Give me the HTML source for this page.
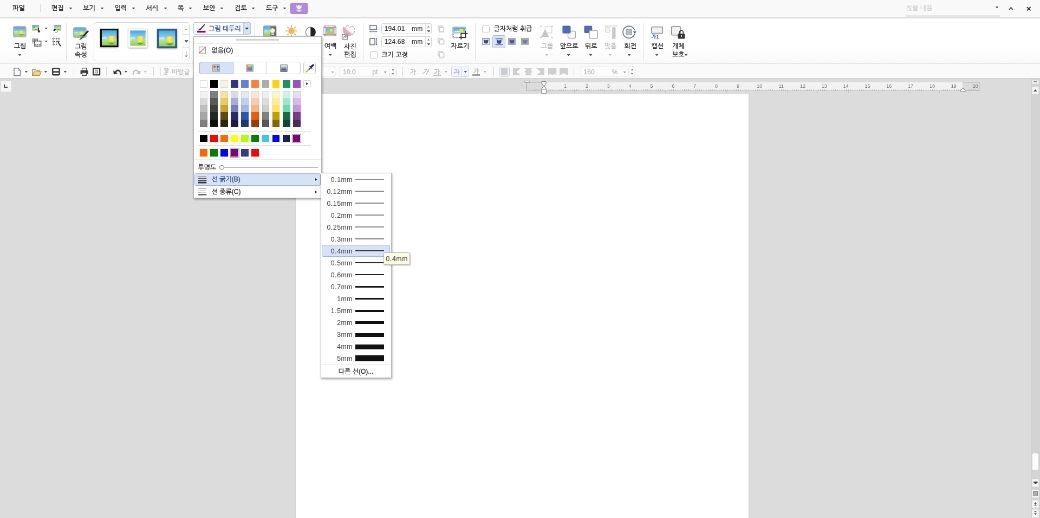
<!DOCTYPE html>
<html lang="ko"><head><meta charset="utf-8"><title>한글</title>
<style>
html,body{margin:0;padding:0;background:#dcdcdc;overflow:hidden;}
body{width:1040px;height:518px;position:relative;font-family:"Liberation Sans","NanumGothic","Noto Sans CJK KR",sans-serif;}
#root{position:absolute;left:0;top:0;width:1920px;height:956.3px;transform:scale(0.5416667);transform-origin:0 0;font-size:12px;color:#1e1e1e;overflow:hidden;background:#dcdcdc;will-change:transform;}
.a{position:absolute;box-sizing:border-box;}
.t{white-space:nowrap;font-size:12px;-webkit-text-stroke:0.34px currentColor;}
.g{color:#b4b4b4;}
.bl{color:#2b4c9b;}
svg{overflow:visible;}
</style></head><body><div id="root">
<div class="a " style="left:0.00px;top:0.00px;width:1920.00px;height:31.38px;background:#f9f9f9;"></div>
<div class="a " style="left:0.00px;top:31.38px;width:1920.00px;height:86.77px;background:linear-gradient(#ffffff,#ffffff 60%,#f9f9f9);"></div>
<div class="a" style="left:0.00px;top:30.89px;height:1px;width:1920.00px;background:#cfcfcf"></div>
<div class="a " style="left:0.00px;top:118.15px;width:1920.00px;height:26.22px;background:#fafafa;"></div>
<div class="a" style="left:0.00px;top:117.29px;height:1px;width:1920.00px;background:#e2e2e2"></div>
<div class="a" style="left:0.00px;top:143.87px;height:1px;width:1920.00px;background:#cfcfcf"></div>
<div class="a " style="left:543.88px;top:173.54px;width:839.63px;height:784.62px;background:#fff;border:2px solid #d3d3d3;border-bottom:0;border-top:0;"></div>
<div class="a " style="left:1903.38px;top:144.74px;width:16.62px;height:811.57px;background:#d3d3d3;"></div>
<div class="a t " style="left:23.26px;top:4.06px;height:22.15px;line-height:22.15px;color:#1e1e1e;-webkit-text-stroke:0.5px #1e1e1e;">파일</div>
<div class="a t " style="left:95.08px;top:4.06px;height:22.15px;line-height:22.15px;color:#1e1e1e;">편집</div>
<svg class="a" style="left:127.61px;top:13.95px;width:5.10px;height:3.12px;" viewBox="0 0 10 6" preserveAspectRatio="none"><path d="M0 0H10V1.6L5.7 6H4.3L0 1.6Z" fill="#555"/></svg>
<div class="a t " style="left:153.23px;top:4.06px;height:22.15px;line-height:22.15px;color:#1e1e1e;">보기</div>
<svg class="a" style="left:185.76px;top:13.95px;width:5.10px;height:3.12px;" viewBox="0 0 10 6" preserveAspectRatio="none"><path d="M0 0H10V1.6L5.7 6H4.3L0 1.6Z" fill="#555"/></svg>
<div class="a t " style="left:211.57px;top:4.06px;height:22.15px;line-height:22.15px;color:#1e1e1e;">입력</div>
<svg class="a" style="left:243.91px;top:13.95px;width:5.10px;height:3.12px;" viewBox="0 0 10 6" preserveAspectRatio="none"><path d="M0 0H10V1.6L5.7 6H4.3L0 1.6Z" fill="#555"/></svg>
<div class="a t " style="left:269.54px;top:4.06px;height:22.15px;line-height:22.15px;color:#1e1e1e;">서식</div>
<svg class="a" style="left:302.62px;top:13.95px;width:5.10px;height:3.12px;" viewBox="0 0 10 6" preserveAspectRatio="none"><path d="M0 0H10V1.6L5.7 6H4.3L0 1.6Z" fill="#555"/></svg>
<div class="a t " style="left:328.06px;top:4.06px;height:22.15px;line-height:22.15px;color:#1e1e1e;">쪽</div>
<svg class="a" style="left:349.14px;top:13.95px;width:5.10px;height:3.12px;" viewBox="0 0 10 6" preserveAspectRatio="none"><path d="M0 0H10V1.6L5.7 6H4.3L0 1.6Z" fill="#555"/></svg>
<div class="a t " style="left:374.95px;top:4.06px;height:22.15px;line-height:22.15px;color:#1e1e1e;">보안</div>
<svg class="a" style="left:407.30px;top:13.95px;width:5.10px;height:3.12px;" viewBox="0 0 10 6" preserveAspectRatio="none"><path d="M0 0H10V1.6L5.7 6H4.3L0 1.6Z" fill="#555"/></svg>
<div class="a t " style="left:433.11px;top:4.06px;height:22.15px;line-height:22.15px;color:#1e1e1e;">검토</div>
<svg class="a" style="left:465.08px;top:13.95px;width:5.10px;height:3.12px;" viewBox="0 0 10 6" preserveAspectRatio="none"><path d="M0 0H10V1.6L5.7 6H4.3L0 1.6Z" fill="#555"/></svg>
<div class="a t " style="left:491.08px;top:4.06px;height:22.15px;line-height:22.15px;color:#1e1e1e;">도구</div>
<svg class="a" style="left:523.24px;top:13.95px;width:5.10px;height:3.12px;" viewBox="0 0 10 6" preserveAspectRatio="none"><path d="M0 0H10V1.6L5.7 6H4.3L0 1.6Z" fill="#555"/></svg>
<div class="a" style="left:74.46px;top:8.31px;width:1px;height:14.77px;background:#d8d8d8"></div>
<div class="a " style="left:535.57px;top:4.98px;width:31.94px;height:20.68px;background:#b189dd;border:1px solid #a576d4;border-radius:2.5px;box-shadow:0 0 0 1.5px rgba(255,255,255,.9);"></div>
<svg class="a" style="left:545.54px;top:7.75px;width:12.00px;height:14.77px;" viewBox="0 0 13 16" preserveAspectRatio="none"><g opacity="0.88"><path d="M1.6 1.4 L4 3.6 L6.5 0.6 L9 3.6 L11.4 1.4 Q12.6 5 11 7.6 Q9.4 9.8 6.5 9.8 Q3.6 9.8 2 7.6 Q0.4 5 1.6 1.4Z" fill="#fff"/><path d="M6.5 9.6 V13" stroke="#fff" stroke-width="1.6"/><path d="M1.6 10.8 Q2.6 14.6 6.5 14 Q10.4 14.6 11.4 10.8 Q9.6 13 6.5 12.4 Q3.4 13 1.6 10.8Z" fill="#fff" stroke="#fff" stroke-width="0.8"/></g></svg>
<div class="a t " style="left:1672.98px;top:3.69px;height:22.15px;line-height:22.15px;color:#cacaca;-webkit-text-stroke:0.15px #cacaca;">찾을 내용</div>
<div class="a " style="left:1672.25px;top:27.88px;width:173.91px;height:3.14px;background:#e7e7e7;"></div>
<svg class="a" style="left:1838.07px;top:11.92px;width:5.10px;height:3.12px;" viewBox="0 0 10 6" preserveAspectRatio="none"><path d="M0 0H10V1.6L5.7 6H4.3L0 1.6Z" fill="#555"/></svg>
<svg class="a" style="left:1862.03px;top:13.29px;width:8.86px;height:5.54px;" viewBox="0 0 10 6" preserveAspectRatio="none"><path d="M1 5.5 L5 1 L9 5.5" stroke="#444" stroke-width="2" fill="none"/></svg>
<svg class="a" style="left:1894.52px;top:12.37px;width:8.49px;height:8.12px;" viewBox="0 0 10 10" preserveAspectRatio="none"><path d="M1 1 L9 9 M9 1 L1 9" stroke="#333" stroke-width="2.2" fill="none"/></svg>
<div class="a " style="left:0.00px;top:30.83px;width:1920.00px;height:4.06px;background:linear-gradient(#d2d2d2,#e6e6e6 55%,#ffffff);"></div>
<svg class="a" style="width:0;height:0"><defs><linearGradient id="sky" x1="0" y1="0" x2="0" y2="1"><stop offset="0" stop-color="#44a9e0"/><stop offset="0.55" stop-color="#7cc8ee"/><stop offset="1" stop-color="#a4daf3"/></linearGradient><linearGradient id="grs" x1="0" y1="0" x2="0" y2="1"><stop offset="0" stop-color="#b9e68a"/><stop offset="1" stop-color="#8fcd5c"/></linearGradient></defs></svg>
<svg class="a" style="left:24.00px;top:48.18px;width:24.74px;height:21.05px;" viewBox="0 0 20 16" preserveAspectRatio="none"><rect x="0" y="0" width="20" height="16" rx="2.8" fill="#b4b4b4"/><g transform="translate(1.9 1.9) scale(16.2 12.2)"><rect x="0" y="0" width="1" height="0.66" fill="url(#sky)"/><rect x="0" y="0.6" width="1" height="0.4" fill="url(#grs)"/><path d="M0 0.50 q0.05 -0.12 0.12 -0.06 q0.06 -0.1 0.13 0 q0.08 -0.04 0.12 0.08 q-0.2 0.08 -0.37 0.04z" fill="#e4f4fc" opacity="0.6"/><path d="M0.42 0.78 q0.08 0.14 0.23 0.15 q0.15 -0.01 0.23 -0.15 q-0.12 0.08 -0.22 0.02 l-0.02 0 q-0.1 0.06 -0.22 -0.02z" fill="#4aa63a"/><path d="M0.63 0.74 h0.04 v0.16 h-0.04z" fill="#5bb346"/><path d="M0.46 0.40 q0.19 -0.1 0.38 0 v0.18 a0.19 0.2 0 0 1 -0.38 0z" fill="#ffdb20"/><path d="M0.54 0.42 q0.11 -0.05 0.22 0 v0.15 a0.11 0.14 0 0 1 -0.22 0z" fill="#ffe75a"/></g></svg>
<div class="a t " style="left:25.85px;top:74.22px;height:22.15px;line-height:22.15px;">그림</div>
<svg class="a" style="left:34.01px;top:100.16px;width:5.10px;height:3.12px;" viewBox="0 0 10 6" preserveAspectRatio="none"><path d="M0 0H10V1.6L5.7 6H4.3L0 1.6Z" fill="#555"/></svg>
<svg class="a" style="left:58.71px;top:46.15px;width:12.92px;height:10.52px;" viewBox="0 0 20 16" preserveAspectRatio="none"><rect x="0" y="0" width="20" height="16" rx="1" fill="#b4b4b4"/><g transform="translate(1.2 1.2) scale(17.6 13.6)"><rect x="0" y="0" width="1" height="0.66" fill="url(#sky)"/><rect x="0" y="0.6" width="1" height="0.4" fill="url(#grs)"/><path d="M0 0.50 q0.05 -0.12 0.12 -0.06 q0.06 -0.1 0.13 0 q0.08 -0.04 0.12 0.08 q-0.2 0.08 -0.37 0.04z" fill="#e4f4fc" opacity="0.6"/><path d="M0.42 0.78 q0.08 0.14 0.23 0.15 q0.15 -0.01 0.23 -0.15 q-0.12 0.08 -0.22 0.02 l-0.02 0 q-0.1 0.06 -0.22 -0.02z" fill="#4aa63a"/><path d="M0.63 0.74 h0.04 v0.16 h-0.04z" fill="#5bb346"/><path d="M0.46 0.40 q0.19 -0.1 0.38 0 v0.18 a0.19 0.2 0 0 1 -0.38 0z" fill="#ffdb20"/><path d="M0.54 0.42 q0.11 -0.05 0.22 0 v0.15 a0.11 0.14 0 0 1 -0.22 0z" fill="#ffe75a"/></g><circle cx="6.4" cy="6.6" r="2.4" fill="#2a8fe6"/></svg>
<svg class="a" style="left:69.42px;top:51.32px;width:5.17px;height:9.23px;" viewBox="0 0 5.6 10" preserveAspectRatio="none"><path d="M2.2 0V6.4" stroke="#222" stroke-width="1.8"/><path d="M0.8 5.6 H5 V9.4 H1.6Z" fill="#222"/></svg>
<svg class="a" style="left:82.77px;top:51.18px;width:4.67px;height:2.88px;" viewBox="0 0 10 6" preserveAspectRatio="none"><path d="M0 0H10V1.6L5.7 6H4.3L0 1.6Z" fill="#555"/></svg>
<svg class="a" style="left:99.69px;top:46.15px;width:12.92px;height:10.52px;" viewBox="0 0 20 16" preserveAspectRatio="none"><rect x="0" y="0" width="20" height="16" rx="1" fill="#b4b4b4"/><g transform="translate(1.2 1.2) scale(17.6 13.6)"><rect x="0" y="0" width="1" height="0.66" fill="url(#sky)"/><rect x="0" y="0.6" width="1" height="0.4" fill="url(#grs)"/><path d="M0 0.50 q0.05 -0.12 0.12 -0.06 q0.06 -0.1 0.13 0 q0.08 -0.04 0.12 0.08 q-0.2 0.08 -0.37 0.04z" fill="#e4f4fc" opacity="0.6"/><path d="M0.42 0.78 q0.08 0.14 0.23 0.15 q0.15 -0.01 0.23 -0.15 q-0.12 0.08 -0.22 0.02 l-0.02 0 q-0.1 0.06 -0.22 -0.02z" fill="#4aa63a"/><path d="M0.63 0.74 h0.04 v0.16 h-0.04z" fill="#5bb346"/><path d="M0.46 0.40 q0.19 -0.1 0.38 0 v0.18 a0.19 0.2 0 0 1 -0.38 0z" fill="#ffdb20"/><path d="M0.54 0.42 q0.11 -0.05 0.22 0 v0.15 a0.11 0.14 0 0 1 -0.22 0z" fill="#ffe75a"/></g><circle cx="6.4" cy="6.6" r="2.2" fill="#9fd0f0"/></svg>
<svg class="a" style="left:96.74px;top:52.80px;width:10.71px;height:8.12px;" viewBox="0 0 11.6 8.8" preserveAspectRatio="none"><path d="M10.6 4.4 Q9.6 8 4.6 8" stroke="#8a8a8a" stroke-width="1.3" fill="none"/><path d="M0.4 3 L4.2 0.6 L4.8 4.8Z" fill="#222"/><path d="M3.4 2.8 L6.6 1.8" stroke="#222" stroke-width="1.6"/></svg>
<svg class="a" style="left:58.71px;top:70.71px;width:17.35px;height:14.58px;" viewBox="0 0 18.8 15.8" preserveAspectRatio="none"><rect x="0" y="0" width="12.4" height="9.8" fill="#a8a8a8"/><rect x="1" y="1" width="10.4" height="7.8" fill="#4a7ad8"/><rect x="1" y="1" width="3.6" height="7.8" fill="#8fb4ee"/><circle cx="8.4" cy="3.6" r="2.2" fill="#f2a83a"/><rect x="1" y="6.4" width="10.4" height="2.4" fill="#e8d890"/><rect x="5.4" y="5.2" width="12.6" height="10" fill="#fff" stroke="#2a2a2a" stroke-width="1.6" stroke-dasharray="3.4 0.7"/><path d="M5.4 11.6H18" stroke="#333" stroke-width="1.3" stroke-dasharray="3.4 0.7"/></svg>
<svg class="a" style="left:82.77px;top:74.99px;width:4.67px;height:2.88px;" viewBox="0 0 10 6" preserveAspectRatio="none"><path d="M0 0H10V1.6L5.7 6H4.3L0 1.6Z" fill="#555"/></svg>
<svg class="a" style="left:96.00px;top:68.68px;width:16.62px;height:16.62px;" viewBox="0 0 18 18" preserveAspectRatio="none"><path d="M1 2H15 M1 8H15 M1 14H11 M2.4 0.5V15.4 M8.4 0.5V15.4 M14 0.5V10" stroke="#444" stroke-width="1.5" stroke-dasharray="2 1.3" fill="none"/><path d="M11.6 7.6 L14.6 13.6 L17.6 17.6" stroke="#222" stroke-width="2" fill="none"/></svg>
<div class="a" style="left:122.09px;top:42.83px;width:1px;height:68.68px;background:#e0e0e0"></div>
<svg class="a" style="left:134.95px;top:49.66px;width:24.92px;height:20.12px;" viewBox="0 0 20 16" preserveAspectRatio="none"><rect x="0" y="0" width="20" height="16" rx="2.8" fill="#b4b4b4"/><g transform="translate(1.9 1.9) scale(16.2 12.2)"><rect x="0" y="0" width="1" height="0.66" fill="url(#sky)"/><rect x="0" y="0.6" width="1" height="0.4" fill="url(#grs)"/><path d="M0 0.50 q0.05 -0.12 0.12 -0.06 q0.06 -0.1 0.13 0 q0.08 -0.04 0.12 0.08 q-0.2 0.08 -0.37 0.04z" fill="#e4f4fc" opacity="0.6"/><path d="M0.42 0.78 q0.08 0.14 0.23 0.15 q0.15 -0.01 0.23 -0.15 q-0.12 0.08 -0.22 0.02 l-0.02 0 q-0.1 0.06 -0.22 -0.02z" fill="#4aa63a"/><path d="M0.63 0.74 h0.04 v0.16 h-0.04z" fill="#5bb346"/><path d="M0.46 0.40 q0.19 -0.1 0.38 0 v0.18 a0.19 0.2 0 0 1 -0.38 0z" fill="#ffdb20"/><path d="M0.54 0.42 q0.11 -0.05 0.22 0 v0.15 a0.11 0.14 0 0 1 -0.22 0z" fill="#ffe75a"/></g></svg>
<svg class="a" style="left:145.11px;top:56.49px;width:18.83px;height:18.09px;" viewBox="0 0 20.4 19.6" preserveAspectRatio="none"><path d="M18.6 2 L8.4 13" stroke="#2a2a2a" stroke-width="3.4" stroke-linecap="round"/><path d="M9.6 10.6 L11.6 12.6 L6.6 17.4 Q3.6 19.4 0.8 19 Q3.4 17.4 4 14.8Z" fill="#2f62c0"/></svg>
<div class="a t " style="left:138.09px;top:74.95px;height:22.15px;line-height:22.15px;">그림</div>
<div class="a t " style="left:138.09px;top:89.72px;height:22.15px;line-height:22.15px;">속성</div>
<div class="a " style="left:172.80px;top:41.17px;width:176.86px;height:72.18px;background:#fff;border:1px solid #d9d9d9;border-radius:5px;"></div>
<div class="a" style="left:336.79px;top:41.72px;width:1px;height:71.26px;background:#e4e4e4"></div>
<div class="a" style="left:337.29px;top:63.01px;height:1px;width:12.00px;background:#e4e4e4"></div>
<div class="a" style="left:337.29px;top:87.19px;height:1px;width:12.00px;background:#e4e4e4"></div>
<svg class="a" style="left:184.98px;top:53.17px;width:33.60px;height:33.97px;filter:drop-shadow(0.5px 1.5px 1.5px rgba(0,0,0,.45));" viewBox="0 0 20 20" preserveAspectRatio="none"><rect x="0" y="0" width="20" height="20" fill="#0a0a0a"/><g transform="translate(1.75 1.75) scale(16.5 16.5)"><rect x="0" y="0" width="1" height="0.66" fill="url(#sky)"/><rect x="0" y="0.6" width="1" height="0.4" fill="url(#grs)"/><path d="M0 0.50 q0.05 -0.12 0.12 -0.06 q0.06 -0.1 0.13 0 q0.08 -0.04 0.12 0.08 q-0.2 0.08 -0.37 0.04z" fill="#e4f4fc" opacity="0.6"/><path d="M0.42 0.78 q0.08 0.14 0.23 0.15 q0.15 -0.01 0.23 -0.15 q-0.12 0.08 -0.22 0.02 l-0.02 0 q-0.1 0.06 -0.22 -0.02z" fill="#4aa63a"/><path d="M0.63 0.74 h0.04 v0.16 h-0.04z" fill="#5bb346"/><path d="M0.46 0.40 q0.19 -0.1 0.38 0 v0.18 a0.19 0.2 0 0 1 -0.38 0z" fill="#ffdb20"/><path d="M0.54 0.42 q0.11 -0.05 0.22 0 v0.15 a0.11 0.14 0 0 1 -0.22 0z" fill="#ffe75a"/></g></svg>
<svg class="a" style="left:237.05px;top:52.80px;width:35.08px;height:34.89px;filter:drop-shadow(0.5px 1.5px 1.5px rgba(0,0,0,.45));" viewBox="0 0 20 20" preserveAspectRatio="none"><rect x="0" y="0" width="20" height="20" fill="#ffffff"/><g transform="translate(1.9 1.9) scale(16.2 16.2)"><rect x="0" y="0" width="1" height="0.66" fill="url(#sky)"/><rect x="0" y="0.6" width="1" height="0.4" fill="url(#grs)"/><path d="M0 0.50 q0.05 -0.12 0.12 -0.06 q0.06 -0.1 0.13 0 q0.08 -0.04 0.12 0.08 q-0.2 0.08 -0.37 0.04z" fill="#e4f4fc" opacity="0.6"/><path d="M0.42 0.78 q0.08 0.14 0.23 0.15 q0.15 -0.01 0.23 -0.15 q-0.12 0.08 -0.22 0.02 l-0.02 0 q-0.1 0.06 -0.22 -0.02z" fill="#4aa63a"/><path d="M0.63 0.74 h0.04 v0.16 h-0.04z" fill="#5bb346"/><path d="M0.46 0.40 q0.19 -0.1 0.38 0 v0.18 a0.19 0.2 0 0 1 -0.38 0z" fill="#ffdb20"/><path d="M0.54 0.42 q0.11 -0.05 0.22 0 v0.15 a0.11 0.14 0 0 1 -0.22 0z" fill="#ffe75a"/></g></svg>
<svg class="a" style="left:289.66px;top:52.62px;width:36.92px;height:36.00px;filter:drop-shadow(0.5px 1.5px 1.5px rgba(0,0,0,.45));" viewBox="0 0 20 20" preserveAspectRatio="none"><rect x="0" y="0" width="20" height="20" fill="#2b5797"/><g transform="translate(1.9 1.9) scale(16.2 16.2)"><rect x="0" y="0" width="1" height="0.66" fill="url(#sky)"/><rect x="0" y="0.6" width="1" height="0.4" fill="url(#grs)"/><path d="M0 0.50 q0.05 -0.12 0.12 -0.06 q0.06 -0.1 0.13 0 q0.08 -0.04 0.12 0.08 q-0.2 0.08 -0.37 0.04z" fill="#e4f4fc" opacity="0.6"/><path d="M0.42 0.78 q0.08 0.14 0.23 0.15 q0.15 -0.01 0.23 -0.15 q-0.12 0.08 -0.22 0.02 l-0.02 0 q-0.1 0.06 -0.22 -0.02z" fill="#4aa63a"/><path d="M0.63 0.74 h0.04 v0.16 h-0.04z" fill="#5bb346"/><path d="M0.46 0.40 q0.19 -0.1 0.38 0 v0.18 a0.19 0.2 0 0 1 -0.38 0z" fill="#ffdb20"/><path d="M0.54 0.42 q0.11 -0.05 0.22 0 v0.15 a0.11 0.14 0 0 1 -0.22 0z" fill="#ffe75a"/></g></svg>
<svg class="a" style="left:341.17px;top:51.69px;width:5.17px;height:3.69px;" viewBox="0 0 10 6" preserveAspectRatio="none"><path d="M0 6H10L5 0Z" fill="#a8a8a8"/></svg>
<svg class="a" style="left:340.78px;top:73.60px;width:5.94px;height:4.56px;" viewBox="0 0 10 6" preserveAspectRatio="none"><path d="M0 0H10V1.6L5.7 6H4.3L0 1.6Z" fill="#666"/></svg>
<svg class="a" style="left:341.17px;top:94.15px;width:5.17px;height:11.45px;" viewBox="0 0 6 13" preserveAspectRatio="none"><path d="M3 0V12 M0.5 9 L3 12.5 L5.5 9" stroke="#555" stroke-width="1.1" fill="none"/></svg>
<div class="a " style="left:357.23px;top:41.17px;width:105.97px;height:23.08px;background:#fdfdff;border:1px solid #b4c6ee;border-radius:2.5px;"></div>
<div class="a " style="left:448.98px;top:41.17px;width:14.22px;height:23.08px;background:#d8e2f6;border:1px solid #b4c6ee;border-radius:0 2.5px 2.5px 0;"></div>
<svg class="a" style="left:363.69px;top:45.42px;width:15.51px;height:15.51px;" viewBox="0 0 17 17" preserveAspectRatio="none"><path d="M14.5 1 L6 10.5" stroke="#222" stroke-width="2.2" stroke-linecap="round"/><path d="M6.6 9.2 L3.2 12.4 L2.6 11 Z" fill="#222"/><path d="M7.2 9.4 L4 12.2 L2.2 12.4 L2.8 10.6 L5.8 8z" fill="#333"/><rect x="0" y="13" width="17" height="3.6" fill="#8b008b"/></svg>
<div class="a t " style="left:385.11px;top:41.72px;height:22.15px;line-height:22.15px;color:#2b4c9b;">그림 테두리</div>
<svg class="a" style="left:453.06px;top:50.82px;width:5.52px;height:3.60px;" viewBox="0 0 10 6" preserveAspectRatio="none"><path d="M0 0H10V1.6L5.7 6H4.3L0 1.6Z" fill="#223a7a"/></svg>
<div class="a" style="left:469.35px;top:42.83px;width:1px;height:68.68px;background:#e0e0e0"></div>
<svg class="a" style="left:485.91px;top:47.08px;width:24.55px;height:21.05px;" viewBox="0 0 20 16" preserveAspectRatio="none"><rect x="0" y="0" width="20" height="16" rx="2.2" fill="#a6a6a6"/><g transform="translate(1.5 1.5) scale(17.0 13.0)"><rect x="0" y="0" width="1" height="0.66" fill="url(#sky)"/><rect x="0" y="0.6" width="1" height="0.4" fill="url(#grs)"/><path d="M0 0.50 q0.05 -0.12 0.12 -0.06 q0.06 -0.1 0.13 0 q0.08 -0.04 0.12 0.08 q-0.2 0.08 -0.37 0.04z" fill="#e4f4fc" opacity="0.6"/><path d="M0.42 0.78 q0.08 0.14 0.23 0.15 q0.15 -0.01 0.23 -0.15 q-0.12 0.08 -0.22 0.02 l-0.02 0 q-0.1 0.06 -0.22 -0.02z" fill="#4aa63a"/><path d="M0.63 0.74 h0.04 v0.16 h-0.04z" fill="#5bb346"/><path d="M0.46 0.40 q0.19 -0.1 0.38 0 v0.18 a0.19 0.2 0 0 1 -0.38 0z" fill="#ffdb20"/><path d="M0.54 0.42 q0.11 -0.05 0.22 0 v0.15 a0.11 0.14 0 0 1 -0.22 0z" fill="#ffe75a"/></g><rect x="11" y="1.4" width="7.8" height="13.2" fill="#6e6e6e"/><circle cx="14" cy="7.2" r="3.2" fill="#fffef0"/><path d="M11.6 6.6 A3.2 3.2 0 0 1 14.6 4.1 L13 7.6Z" fill="#ffe23a"/><path d="M12.2 11.2 h3.8 v2 h-3.8z" fill="#f0f0f0"/></svg>
<svg class="a" style="left:526.52px;top:46.34px;width:22.15px;height:22.15px;" viewBox="0 0 24 24" preserveAspectRatio="none"><circle cx="12" cy="12" r="6.2" fill="#ffa64a"/><circle cx="12" cy="12" r="4.2" fill="#ffb25e"/><path d="M20.20 12.00 L23.00 12.00" stroke="#ffa64a" stroke-width="2" stroke-linecap="round"/><path d="M17.80 17.80 L19.78 19.78" stroke="#ffa64a" stroke-width="2" stroke-linecap="round"/><path d="M12.00 20.20 L12.00 23.00" stroke="#ffa64a" stroke-width="2" stroke-linecap="round"/><path d="M6.20 17.80 L4.22 19.78" stroke="#ffa64a" stroke-width="2" stroke-linecap="round"/><path d="M3.80 12.00 L1.00 12.00" stroke="#ffa64a" stroke-width="2" stroke-linecap="round"/><path d="M6.20 6.20 L4.22 4.22" stroke="#ffa64a" stroke-width="2" stroke-linecap="round"/><path d="M12.00 3.80 L12.00 1.00" stroke="#ffa64a" stroke-width="2" stroke-linecap="round"/><path d="M17.80 6.20 L19.78 4.22" stroke="#ffa64a" stroke-width="2" stroke-linecap="round"/></svg>
<svg class="a" style="left:563.08px;top:48.74px;width:20.68px;height:20.68px;" viewBox="0 0 20 20" preserveAspectRatio="none"><circle cx="10" cy="10" r="8.8" fill="#fff" stroke="#a0a0a0" stroke-width="1.7"/><path d="M10 1 A9 9 0 0 1 10 19Z" fill="#222"/></svg>
<svg class="a" style="left:597.42px;top:47.45px;width:24.18px;height:20.12px;" viewBox="0 0 24 20" preserveAspectRatio="none"><rect x="0.9" y="0.9" width="22.2" height="18.2" rx="2.4" fill="#fff" stroke="#b6b6b6" stroke-width="1.8"/><rect x="5" y="4.4" width="14" height="11" fill="#6cc0ea"/><rect x="5" y="10.4" width="14" height="5" fill="#9ad468"/><circle cx="14.4" cy="8.6" r="2.6" fill="#ffe02a"/><path d="M4.2 0.6V19.4 M19.8 0.6V19.4 M0.6 3.6H23.4 M0.6 16.4H23.4" stroke="#e85a5a" stroke-width="0.9" fill="none"/></svg>
<div class="a t " style="left:598.71px;top:74.22px;height:22.15px;line-height:22.15px;">여백</div>
<svg class="a" style="left:606.87px;top:100.16px;width:5.10px;height:3.12px;" viewBox="0 0 10 6" preserveAspectRatio="none"><path d="M0 0H10V1.6L5.7 6H4.3L0 1.6Z" fill="#555"/></svg>
<svg class="a" style="left:631.38px;top:46.52px;width:24.74px;height:26.58px;" viewBox="0 0 26.8 28.8" preserveAspectRatio="none"><path d="M3.4 3.2 L7 6.4 L9.4 1 L13 0.4 L15.6 4.4 L19.4 1.6 Q23.4 1.6 25.4 6 Q28 13 22 17.6 Q16 21.6 9.6 19.4 Q3.6 16.6 2.4 10 Q2 6 3.4 3.2Z" fill="#f6f6f6" stroke="#b0b0b0" stroke-width="1.1"/><path d="M11.6 2.6 L13.4 1.6 L15.4 5.4 L18.8 3.4 L22 5.6 Q24 12 19.4 14.4 Z" fill="#ffffff"/><path d="M3.4 3.2 Q2 6 2.4 10 Q3.6 16.6 9.6 19.4 Q13.4 20.8 17.4 19.8 L20.6 17.6 Z" fill="#f4a2c2"/><rect x="0.8" y="18" width="10.4" height="10" fill="#f4f4f4" stroke="#909090" stroke-width="1.5"/><path d="M2.6 26 L5.6 21.4 L7.4 24 L9.4 22.4" stroke="#8a8a8a" stroke-width="1.2" fill="none"/><rect x="6.4" y="19.6" width="3" height="2.4" fill="#8a8a8a"/></svg>
<div class="a t " style="left:634.89px;top:75.14px;height:22.15px;line-height:22.15px;">사진</div>
<div class="a t " style="left:634.89px;top:90.28px;height:22.15px;line-height:22.15px;">편집</div>
<div class="a" style="left:670.21px;top:42.83px;width:1px;height:68.68px;background:#e0e0e0"></div>
<svg class="a" style="left:682.15px;top:46.15px;width:14.03px;height:14.77px;" viewBox="0 0 15.2 16" preserveAspectRatio="none"><rect x="1" y="1" width="13.2" height="8.4" rx="0.8" fill="#fff" stroke="#7a7a7a" stroke-width="1.9"/><path d="M0.6 13.6H14.6" stroke="#5b7fd0" stroke-width="1.5"/><path d="M0 13.6 L2.4 12 V15.2Z M15.2 13.6 L12.8 12 V15.2Z" fill="#3b62c4"/></svg>
<svg class="a" style="left:681.97px;top:69.97px;width:14.77px;height:13.66px;" viewBox="0 0 16 14.8" preserveAspectRatio="none"><rect x="1" y="1" width="10" height="12.8" rx="0.8" fill="#fff" stroke="#7a7a7a" stroke-width="1.9"/><path d="M14.2 0.6V14.2" stroke="#5b7fd0" stroke-width="1.5"/><path d="M14.2 0 L12.6 2.4 H15.8Z M14.2 14.8 L12.6 12.4 H15.8Z" fill="#3b62c4"/></svg>
<div class="a " style="left:703.57px;top:43.38px;width:93.60px;height:19.57px;background:#fff;border:1px solid #d6d6d6;border-radius:2.5px;"></div>
<div class="a" style="left:784.86px;top:44.12px;width:1px;height:18.09px;background:#dedede"></div>
<div class="a t " style="left:709.66px;top:42.46px;height:22.15px;line-height:22.15px;color:#2c2c2c;-webkit-text-stroke:0.18px #2c2c2c;letter-spacing:0.2px;">194.01</div>
<div class="a t " style="left:759.88px;top:42.46px;height:22.15px;line-height:22.15px;color:#2c2c2c;-webkit-text-stroke:0.18px #2c2c2c;letter-spacing:0.4px;">mm</div>
<svg class="a" style="left:788.86px;top:47.63px;width:4.25px;height:2.58px;" viewBox="0 0 10 6" preserveAspectRatio="none"><path d="M0 6H10L5 0Z" fill="#555"/></svg>
<svg class="a" style="left:788.54px;top:56.29px;width:4.88px;height:3.36px;" viewBox="0 0 10 6" preserveAspectRatio="none"><path d="M0 0H10V1.6L5.7 6H4.3L0 1.6Z" fill="#555"/></svg>
<div class="a " style="left:703.57px;top:67.38px;width:93.60px;height:19.57px;background:#fff;border:1px solid #d6d6d6;border-radius:2.5px;"></div>
<div class="a" style="left:784.86px;top:68.12px;width:1px;height:18.09px;background:#dedede"></div>
<div class="a t " style="left:709.66px;top:66.46px;height:22.15px;line-height:22.15px;color:#2c2c2c;-webkit-text-stroke:0.18px #2c2c2c;letter-spacing:0.2px;">124.68</div>
<div class="a t " style="left:759.88px;top:66.46px;height:22.15px;line-height:22.15px;color:#2c2c2c;-webkit-text-stroke:0.18px #2c2c2c;letter-spacing:0.4px;">mm</div>
<svg class="a" style="left:788.86px;top:71.63px;width:4.25px;height:2.58px;" viewBox="0 0 10 6" preserveAspectRatio="none"><path d="M0 6H10L5 0Z" fill="#555"/></svg>
<svg class="a" style="left:788.54px;top:80.29px;width:4.88px;height:3.36px;" viewBox="0 0 10 6" preserveAspectRatio="none"><path d="M0 0H10V1.6L5.7 6H4.3L0 1.6Z" fill="#555"/></svg>
<div class="a " style="left:683.08px;top:94.52px;width:13.85px;height:13.48px;background:#fff;border:1px solid #c8c8c8;border-radius:2px;"></div>
<div class="a t " style="left:704.31px;top:90.46px;height:22.15px;line-height:22.15px;">크기 고정</div>
<svg class="a" style="left:807.88px;top:46.52px;width:14.03px;height:14.03px;" viewBox="0 0 14 14" preserveAspectRatio="none"><rect x="0.8" y="0.8" width="8" height="8" fill="#fbfbfb" stroke="#cdcdcd" stroke-width="1.5"/><rect x="3.4" y="3.4" width="8" height="8" fill="#fdfdfd" stroke="#c9c9c9" stroke-width="1.5"/><path d="M3 13.4H12" stroke="#cfcfcf" stroke-width="1.2" stroke-dasharray="1.6 1"/></svg>
<svg class="a" style="left:807.88px;top:70.34px;width:14.03px;height:14.03px;" viewBox="0 0 14 14" preserveAspectRatio="none"><rect x="0.8" y="0.8" width="8" height="8" fill="#fbfbfb" stroke="#cdcdcd" stroke-width="1.5"/><rect x="3.4" y="3.4" width="8" height="8" fill="#fdfdfd" stroke="#c9c9c9" stroke-width="1.5"/><path d="M13.2 4V12.4" stroke="#cfcfcf" stroke-width="1.2" stroke-dasharray="1.6 1"/></svg>
<svg class="a" style="left:807.88px;top:94.15px;width:14.03px;height:14.03px;" viewBox="0 0 14 14" preserveAspectRatio="none"><rect x="0.8" y="0.8" width="8" height="8" fill="#fbfbfb" stroke="#cdcdcd" stroke-width="1.5"/><rect x="3.4" y="3.4" width="8" height="8" fill="#fdfdfd" stroke="#c9c9c9" stroke-width="1.5"/><path d="M3 13.4H12 M13.2 4V12.4" stroke="#cfcfcf" stroke-width="1.2" stroke-dasharray="1.6 1"/></svg>
<svg class="a" style="left:834.83px;top:48.74px;width:25.85px;height:21.42px;" viewBox="0 0 28 23" preserveAspectRatio="none"><defs><linearGradient id="sky2" x1="0" y1="0" x2="0" y2="1"><stop offset="0" stop-color="#3fa6e0"/><stop offset="1" stop-color="#9fd8f4"/></linearGradient></defs><rect x="0" y="0" width="28" height="23" rx="2.4" fill="#c4c4c4"/><rect x="1.6" y="1.8" width="24.8" height="19.6" fill="#fff"/><rect x="1.6" y="1.8" width="24.8" height="12" fill="url(#sky2)"/><path d="M4 11 q2 -4 4.4 -2 q2 -2.4 4 0 q2 -0.6 2.6 2z" fill="#dff2fc"/><circle cx="17.8" cy="8.8" r="4.4" fill="#ffe22a"/><path d="M2.4 15V21H13" stroke="#e45858" stroke-width="1.3" stroke-dasharray="2.2 1.2" fill="none"/></svg>
<svg class="a" style="left:847.02px;top:57.23px;width:16.43px;height:16.06px;" viewBox="0 0 17.8 17.4" preserveAspectRatio="none"><path d="M4.6 3.6V17.4 M0 13.2H14.6 M13.6 0V13.2 M4.6 5.6H17.8" stroke="#2a2a2a" stroke-width="1.8" fill="none"/></svg>
<div class="a t " style="left:832.43px;top:74.22px;height:22.15px;line-height:22.15px;">자르기</div>
<div class="a" style="left:876.79px;top:42.83px;width:1px;height:68.68px;background:#e0e0e0"></div>
<div class="a " style="left:889.85px;top:46.52px;width:13.85px;height:13.29px;background:#fff;border:1px solid #c8c8c8;border-radius:2px;"></div>
<div class="a t " style="left:911.45px;top:42.09px;height:22.15px;line-height:22.15px;">글자처럼 취급</div>
<svg class="a" style="left:890.03px;top:70.15px;width:14.40px;height:12.92px;" viewBox="0 0 16 14" preserveAspectRatio="none"><rect x="0" y="0" width="16" height="14" fill="#a4a4a4"/><rect x="1.4" y="2.6" width="13.2" height="10" fill="#f2f4fa"/><path d="M3 3.4 L6 4.4 Q8 5.4 10 4.4 L13 3.4 L12.4 8.4 Q11.6 11.4 8 11.4 Q4.4 11.4 3.6 8.4Z" fill="#2a48b0"/></svg>
<div class="a " style="left:908.86px;top:64.80px;width:24.55px;height:24.37px;background:#dbe4f7;border:1px solid #a4b9ea;border-radius:2.5px;"></div>
<svg class="a" style="left:913.85px;top:70.15px;width:14.77px;height:13.29px;" viewBox="0 0 16 14" preserveAspectRatio="none"><path d="M0.5 1.4H15.5" stroke="#8a8a8a" stroke-width="2.4"/><path d="M0.5 13.2H15.5" stroke="#666" stroke-width="1.5"/><path d="M3 3.4 L6 4.4 Q8 5.4 10 4.4 L13 3.4 L12.4 8.4 Q11.6 11.4 8 11.4 Q4.4 11.4 3.6 8.4Z" fill="#2a48b0"/></svg>
<svg class="a" style="left:938.22px;top:70.15px;width:14.03px;height:12.92px;" viewBox="0 0 16 14" preserveAspectRatio="none"><rect x="0" y="0" width="16" height="14" fill="#a8a8a8"/><path d="M3 3.4 L6 4.4 Q8 5.4 10 4.4 L13 3.4 L12.4 8.4 Q11.6 11.4 8 11.4 Q4.4 11.4 3.6 8.4Z" fill="#3a58b4"/></svg>
<svg class="a" style="left:962.22px;top:70.15px;width:14.40px;height:12.92px;" viewBox="0 0 16 14" preserveAspectRatio="none"><rect x="0" y="0" width="16" height="14" fill="#a8a8a8"/><path d="M3 3.4 L6 4.4 Q8 5.4 10 4.4 L13 3.4 L12.4 8.4 Q11.6 11.4 8 11.4 Q4.4 11.4 3.6 8.4Z" fill="#6c7eb4"/></svg>
<svg class="a" style="left:996.74px;top:47.45px;width:23.82px;height:24.55px;" viewBox="0 0 24 25" preserveAspectRatio="none"><rect x="9.5" y="2" width="12.5" height="12" fill="none" stroke="#d4d4d4" stroke-width="1.3"/><path d="M2 22 L9.5 6.5 L17 22Z" fill="#c6c6c6"/><path d="M0.5 0.5h2.4v2.4h-2.4z M21.2 0.5h2.4v2.4h-2.4z M0.5 21.6h2.4v2.4h-2.4z M21.2 21.6h2.4v2.4h-2.4z" fill="#c2c2c2"/></svg>
<div class="a t " style="left:998.77px;top:74.22px;height:22.15px;line-height:22.15px;color:#bdbdbd;">그룹</div>
<svg class="a" style="left:1006.74px;top:100.16px;width:5.10px;height:3.12px;" viewBox="0 0 10 6" preserveAspectRatio="none"><path d="M0 0H10V1.6L5.7 6H4.3L0 1.6Z" fill="#c4c4c4"/></svg>
<svg class="a" style="left:1037.72px;top:47.08px;width:25.48px;height:24.55px;" viewBox="0 0 26 25" preserveAspectRatio="none"><rect x="10.8" y="10.6" width="14" height="13.4" rx="1.8" fill="#fff" stroke="#aaa" stroke-width="1.5"/><rect x="0.4" y="0.4" width="15.4" height="14.6" rx="1.8" fill="#4b6cb7"/></svg>
<div class="a t " style="left:1033.66px;top:74.22px;height:22.15px;line-height:22.15px;">앞으로</div>
<svg class="a" style="left:1047.18px;top:100.16px;width:5.10px;height:3.12px;" viewBox="0 0 10 6" preserveAspectRatio="none"><path d="M0 0H10V1.6L5.7 6H4.3L0 1.6Z" fill="#555"/></svg>
<svg class="a" style="left:1078.15px;top:47.08px;width:25.66px;height:24.55px;" viewBox="0 0 26 25" preserveAspectRatio="none"><rect x="0.4" y="0.4" width="15" height="13.8" rx="1.8" fill="#4b6cb7"/><rect x="10.2" y="9.6" width="15" height="14.6" rx="1.8" fill="#fff" stroke="#aaa" stroke-width="1.6"/></svg>
<div class="a t " style="left:1080.00px;top:74.22px;height:22.15px;line-height:22.15px;">뒤로</div>
<svg class="a" style="left:1087.79px;top:100.16px;width:5.10px;height:3.12px;" viewBox="0 0 10 6" preserveAspectRatio="none"><path d="M0 0H10V1.6L5.7 6H4.3L0 1.6Z" fill="#555"/></svg>
<svg class="a" style="left:1114.52px;top:46.52px;width:24.37px;height:25.48px;" viewBox="0 0 25 26" preserveAspectRatio="none"><path d="M0 1H25" stroke="#d4d4d4" stroke-width="1.6"/><rect x="3" y="3.4" width="8" height="9.6" fill="#f4f4f4" stroke="#d8d8d8" stroke-width="1.2"/><rect x="15.6" y="3.4" width="6.4" height="22" fill="#c8c8c8"/></svg>
<div class="a t " style="left:1115.63px;top:74.22px;height:22.15px;line-height:22.15px;color:#bdbdbd;">맞춤</div>
<svg class="a" style="left:1123.79px;top:100.16px;width:5.10px;height:3.12px;" viewBox="0 0 10 6" preserveAspectRatio="none"><path d="M0 0H10V1.6L5.7 6H4.3L0 1.6Z" fill="#c4c4c4"/></svg>
<svg class="a" style="left:1149.23px;top:46.15px;width:25.85px;height:25.85px;" viewBox="0 0 28 28" preserveAspectRatio="none"><path d="M24.6 11 A12 12 0 1 0 24.4 18.4" fill="none" stroke="#4b6cb7" stroke-width="1.7"/><path d="M21.6 13 H28 L24.8 17.8Z" fill="#3f60b0"/><rect x="7.4" y="9" width="11.4" height="10.6" rx="1.6" fill="#c4c4c4" stroke="#9c9c9c" stroke-width="1.4"/><path d="M11.2 9V19.6 M15 9V19.6 M7.4 12.6H18.8 M7.4 16H18.8" stroke="#b0b0b0" stroke-width="0.8"/></svg>
<div class="a t " style="left:1152.18px;top:74.22px;height:22.15px;line-height:22.15px;">회전</div>
<svg class="a" style="left:1159.42px;top:100.16px;width:5.10px;height:3.12px;" viewBox="0 0 10 6" preserveAspectRatio="none"><path d="M0 0H10V1.6L5.7 6H4.3L0 1.6Z" fill="#555"/></svg>
<div class="a" style="left:1186.58px;top:42.83px;width:1px;height:68.68px;background:#e0e0e0"></div>
<svg class="a" style="left:1201.85px;top:48.74px;width:22.15px;height:13.29px;" viewBox="0 0 22 13" preserveAspectRatio="none"><rect x="0.8" y="0.8" width="20.4" height="11.4" rx="2" fill="#f1f1f1" stroke="#8a8a8a" stroke-width="1.5"/></svg>
<div class="a t " style="left:1202.22px;top:56.86px;height:22.15px;line-height:22.15px;font-size:9.2px;color:#3560c8;-webkit-text-stroke:0.45px #3560c8;letter-spacing:0.3px;">가1</div>
<div class="a t " style="left:1202.22px;top:74.22px;height:22.15px;line-height:22.15px;">캡션</div>
<svg class="a" style="left:1210.01px;top:100.16px;width:5.10px;height:3.12px;" viewBox="0 0 10 6" preserveAspectRatio="none"><path d="M0 0H10V1.6L5.7 6H4.3L0 1.6Z" fill="#555"/></svg>
<svg class="a" style="left:1239.14px;top:48.18px;width:25.85px;height:23.82px;" viewBox="0 0 26 24" preserveAspectRatio="none"><rect x="0.8" y="0.8" width="16.4" height="16" rx="2" fill="#f1f1f1" stroke="#8a8a8a" stroke-width="1.5"/><path d="M15.6 15 V11.6 A3.4 3.4 0 0 1 22.4 11.6 V15" fill="none" stroke="#333" stroke-width="1.6"/><rect x="12.6" y="14.4" width="12.8" height="9.2" rx="1" fill="#333"/><rect x="18.2" y="17" width="1.6" height="3.6" fill="#fff"/></svg>
<div class="a t " style="left:1240.98px;top:74.22px;height:22.15px;line-height:22.15px;">개체</div>
<div class="a t " style="left:1240.98px;top:89.91px;height:22.15px;line-height:22.15px;">보호</div>
<svg class="a" style="left:1263.54px;top:100.35px;width:5.10px;height:3.12px;" viewBox="0 0 10 6" preserveAspectRatio="none"><path d="M0 0H10V1.6L5.7 6H4.3L0 1.6Z" fill="#555"/></svg>
<svg class="a" style="left:25.11px;top:124.80px;width:13.29px;height:15.32px;" viewBox="0 0 13 15" preserveAspectRatio="none"><path d="M1 0.8H8.2L12 4.6V14.2H1Z" fill="#fff" stroke="#7c7c7c" stroke-width="1.4" stroke-linejoin="round"/><path d="M8.2 0.8V4.6H12" fill="none" stroke="#8a8a8a" stroke-width="1"/></svg>
<svg class="a" style="left:45.66px;top:131.48px;width:4.67px;height:2.88px;" viewBox="0 0 10 6" preserveAspectRatio="none"><path d="M0 0H10V1.6L5.7 6H4.3L0 1.6Z" fill="#555"/></svg>
<svg class="a" style="left:58.52px;top:126.65px;width:17.91px;height:13.29px;" viewBox="0 0 18 13" preserveAspectRatio="none"><path d="M0.8 12V1H6L7.6 2.8H14V5" fill="#fdf6e0" stroke="#9a8040" stroke-width="1.2"/><path d="M0.8 12.2 L4 5.2H17.4L14 12.2Z" fill="#f6d27a" stroke="#a88a3a" stroke-width="1.1"/></svg>
<svg class="a" style="left:81.85px;top:131.48px;width:4.67px;height:2.88px;" viewBox="0 0 10 6" preserveAspectRatio="none"><path d="M0 0H10V1.6L5.7 6H4.3L0 1.6Z" fill="#555"/></svg>
<svg class="a" style="left:96.00px;top:125.17px;width:14.77px;height:14.40px;" viewBox="0 0 15 15" preserveAspectRatio="none"><rect x="1.2" y="1.2" width="12.6" height="12.6" rx="1" fill="#fff" stroke="#3a3a3a" stroke-width="2.4"/><path d="M1 8H14" stroke="#3a3a3a" stroke-width="2.8"/></svg>
<svg class="a" style="left:117.66px;top:131.48px;width:4.67px;height:2.88px;" viewBox="0 0 10 6" preserveAspectRatio="none"><path d="M0 0H10V1.6L5.7 6H4.3L0 1.6Z" fill="#555"/></svg>
<div class="a" style="left:135.56px;top:124.06px;width:1px;height:17.35px;background:#d8d8d8"></div>
<svg class="a" style="left:148.43px;top:125.17px;width:15.14px;height:15.14px;" viewBox="0 0 16 16" preserveAspectRatio="none"><rect x="3.8" y="0.8" width="8.4" height="5" fill="#fff" stroke="#444" stroke-width="1.3"/><rect x="0.6" y="5" width="14.8" height="7.4" rx="1.4" fill="#3a3a3a"/><rect x="3.8" y="9.6" width="8.4" height="5.6" fill="#fff" stroke="#444" stroke-width="1.3"/><path d="M5.4 12.4H10.6" stroke="#777" stroke-width="1"/></svg>
<svg class="a" style="left:170.77px;top:125.17px;width:14.22px;height:14.40px;" viewBox="0 0 14 14.2" preserveAspectRatio="none"><rect x="1.1" y="1.1" width="11.8" height="12" fill="#fff" stroke="#333" stroke-width="2.2"/><rect x="4.6" y="4.2" width="4.8" height="5.6" fill="#fff" stroke="#666" stroke-width="1"/><path d="M5.6 6H8 M5.6 7.8H8" stroke="#888" stroke-width="0.7"/></svg>
<div class="a" style="left:195.75px;top:124.06px;width:1px;height:17.35px;background:#d8d8d8"></div>
<svg class="a" style="left:208.62px;top:126.65px;width:14.77px;height:11.82px;" viewBox="0 0 16 12.8" preserveAspectRatio="none"><path d="M4 7.6 Q7 1.6 11.6 3.6 Q15 5.6 15 11.6" stroke="#333" stroke-width="2.8" fill="none"/><path d="M0.2 3.2 L1 11.4 L8.8 9.2Z" fill="#333"/></svg>
<svg class="a" style="left:230.28px;top:131.48px;width:4.67px;height:2.88px;" viewBox="0 0 10 6" preserveAspectRatio="none"><path d="M0 0H10V1.6L5.7 6H4.3L0 1.6Z" fill="#555"/></svg>
<svg class="a" style="left:244.80px;top:126.65px;width:14.77px;height:11.82px;" viewBox="0 0 16 12.8" preserveAspectRatio="none"><path d="M12 7.6 Q9 1.6 4.4 3.6 Q1 5.6 1 11.6" stroke="#c4c4c4" stroke-width="2.8" fill="none"/><path d="M15.8 3.2 L15 11.4 L7.2 9.2Z" fill="#c4c4c4"/></svg>
<svg class="a" style="left:265.73px;top:131.48px;width:4.67px;height:2.88px;" viewBox="0 0 10 6" preserveAspectRatio="none"><path d="M0 0H10V1.6L5.7 6H4.3L0 1.6Z" fill="#c4c4c4"/></svg>
<div class="a" style="left:283.44px;top:124.06px;width:1px;height:17.35px;background:#d8d8d8"></div>
<div class="a " style="left:295.94px;top:122.77px;width:65.91px;height:18.46px;background:#fdfdfd;border:1px solid #e0e0e0;border-radius:3px;"></div>
<svg class="a" style="left:300.92px;top:126.09px;width:11.08px;height:12.55px;" viewBox="0 0 12 13" preserveAspectRatio="none"><path d="M1.6 1.2H11.4 M4 4.6H11.4 M3 8H9.6 M0.6 11.6H8.4" stroke="#c9c9c9" stroke-width="2.6"/><path d="M9.6 1L5 12" stroke="#cfcfcf" stroke-width="2.2"/></svg>
<div class="a t " style="left:316.98px;top:121.85px;height:22.15px;line-height:22.15px;color:#bcbcbc;">바탕글</div>
<div class="a " style="left:461.54px;top:122.95px;width:157.85px;height:18.28px;background:#fdfdfd;border:1px solid #e0e0e0;border-radius:3px;"></div>
<svg class="a" style="left:611.62px;top:131.60px;width:4.46px;height:2.64px;" viewBox="0 0 10 6" preserveAspectRatio="none"><path d="M0 0H10V1.6L5.7 6H4.3L0 1.6Z" fill="#a8a8a8"/></svg>
<div class="a " style="left:627.32px;top:122.95px;width:104.68px;height:18.28px;background:#fdfdfd;border:1px solid #e0e0e0;border-radius:3px;"></div>
<div class="a t " style="left:633.23px;top:121.85px;height:22.15px;line-height:22.15px;color:#bcbcbc;">10.0</div>
<div class="a t " style="left:687.32px;top:121.85px;height:22.15px;line-height:22.15px;color:#bcbcbc;">pt</div>
<svg class="a" style="left:709.28px;top:131.60px;width:4.46px;height:2.64px;" viewBox="0 0 10 6" preserveAspectRatio="none"><path d="M0 0H10V1.6L5.7 6H4.3L0 1.6Z" fill="#8c8c8c"/></svg>
<div class="a" style="left:718.02px;top:124.80px;width:1px;height:15.51px;background:#e4e4e4"></div>
<svg class="a" style="left:722.77px;top:126.65px;width:4.43px;height:2.95px;" viewBox="0 0 10 6" preserveAspectRatio="none"><path d="M0 6H10V4.4L5.7 0H4.3L0 4.4Z" fill="#858585"/></svg>
<svg class="a" style="left:722.97px;top:135.11px;width:4.03px;height:2.64px;" viewBox="0 0 10 6" preserveAspectRatio="none"><path d="M0 0H10V1.6L5.7 6H4.3L0 1.6Z" fill="#858585"/></svg>
<div class="a" style="left:742.95px;top:124.06px;width:1px;height:17.35px;background:#d8d8d8"></div>
<div class="a t " style="left:756.92px;top:121.85px;height:22.15px;line-height:22.15px;color:#b2b2b2;">가</div>
<div class="a t " style="left:779.08px;top:121.85px;height:22.15px;line-height:22.15px;color:#b4b4b4;font-style:italic;transform:skewX(-12deg);">가</div>
<div class="a t " style="left:801.23px;top:121.85px;height:22.15px;line-height:22.15px;color:#b4b4b4;border-bottom:1px solid #b4b4b4;height:15.51px;line-height:22.15px;">가</div>
<div class="a" style="left:800.49px;top:139.07px;height:1px;width:13.66px;background:#b8b8b8"></div>
<svg class="a" style="left:821.05px;top:131.48px;width:4.67px;height:2.88px;" viewBox="0 0 10 6" preserveAspectRatio="none"><path d="M0 0H10V1.6L5.7 6H4.3L0 1.6Z" fill="#bbb"/></svg>
<div class="a " style="left:833.17px;top:123.14px;width:32.68px;height:18.46px;background:#f1f5fd;border:1px solid #c6d4f1;border-radius:2.5px;"></div>
<div class="a" style="left:852.42px;top:123.69px;width:1px;height:17.35px;background:#c6d4f1"></div>
<div class="a t " style="left:837.42px;top:121.85px;height:22.15px;line-height:22.15px;color:#b0b6c8;text-decoration:line-through;">가</div>
<svg class="a" style="left:857.23px;top:131.48px;width:4.67px;height:2.88px;" viewBox="0 0 10 6" preserveAspectRatio="none"><path d="M0 0H10V1.6L5.7 6H4.3L0 1.6Z" fill="#556"/></svg>
<div class="a t " style="left:873.23px;top:120.55px;height:22.15px;line-height:22.15px;color:#b2b2b2;">가</div>
<div class="a " style="left:871.94px;top:137.17px;width:14.22px;height:2.40px;background:#a0a0a0;"></div>
<svg class="a" style="left:893.05px;top:131.48px;width:4.67px;height:2.88px;" viewBox="0 0 10 6" preserveAspectRatio="none"><path d="M0 0H10V1.6L5.7 6H4.3L0 1.6Z" fill="#bbb"/></svg>
<div class="a" style="left:910.95px;top:124.06px;width:1px;height:17.35px;background:#d8d8d8"></div>
<div class="a " style="left:921.60px;top:123.14px;width:19.38px;height:18.46px;background:#eef2fc;border:1px solid #c6d4f1;border-radius:2.5px;"></div>
<div class="a " style="left:925.29px;top:125.91px;width:12.18px;height:13.11px;background:#cdcdcd;"></div>
<svg class="a" style="left:946.52px;top:125.91px;width:14.22px;height:13.11px;" viewBox="0 0 10 10" preserveAspectRatio="none"><path d="M0 0H10L4.5 5L10 10H0Z" fill="#cfcfcf"/></svg>
<svg class="a" style="left:967.75px;top:125.91px;width:14.95px;height:13.11px;" viewBox="0 0 10 10" preserveAspectRatio="none"><path d="M0 0H10L7.4 2.5L10 5L7.4 7.5L10 10H0L2.6 7.5L0 5L2.6 2.5Z" fill="#cfcfcf"/></svg>
<svg class="a" style="left:989.91px;top:125.91px;width:14.77px;height:13.11px;" viewBox="0 0 10 10" preserveAspectRatio="none"><path d="M10 0H0L5.5 5L0 10H10Z" fill="#cfcfcf"/></svg>
<svg class="a" style="left:1011.69px;top:125.91px;width:15.32px;height:13.11px;" viewBox="0 0 10 10" preserveAspectRatio="none"><path d="M0 0H10V10L7.5 7.6L5 10L2.5 7.6L0 10Z" fill="#cfcfcf"/></svg>
<svg class="a" style="left:1033.48px;top:125.91px;width:15.69px;height:13.11px;" viewBox="0 0 10 10" preserveAspectRatio="none"><path d="M0 0H10V10L5 7L0 10Z" fill="#cfcfcf"/></svg>
<div class="a" style="left:1059.19px;top:124.06px;width:1px;height:17.35px;background:#d8d8d8"></div>
<div class="a " style="left:1071.51px;top:122.95px;width:101.91px;height:18.28px;background:#fdfdfd;border:1px solid #e0e0e0;border-radius:3px;"></div>
<div class="a t " style="left:1077.60px;top:121.85px;height:22.15px;line-height:22.15px;color:#bcbcbc;">160</div>
<div class="a t " style="left:1129.85px;top:121.85px;height:22.15px;line-height:22.15px;color:#bcbcbc;">%</div>
<svg class="a" style="left:1150.88px;top:131.60px;width:4.46px;height:2.64px;" viewBox="0 0 10 6" preserveAspectRatio="none"><path d="M0 0H10V1.6L5.7 6H4.3L0 1.6Z" fill="#8c8c8c"/></svg>
<div class="a" style="left:1159.81px;top:124.80px;width:1px;height:15.51px;background:#e4e4e4"></div>
<svg class="a" style="left:1165.11px;top:126.65px;width:4.43px;height:2.95px;" viewBox="0 0 10 6" preserveAspectRatio="none"><path d="M0 6H10V4.4L5.7 0H4.3L0 4.4Z" fill="#858585"/></svg>
<svg class="a" style="left:1165.31px;top:135.11px;width:4.03px;height:2.64px;" viewBox="0 0 10 6" preserveAspectRatio="none"><path d="M0 0H10V1.6L5.7 6H4.3L0 1.6Z" fill="#858585"/></svg>
<div class="a " style="left:1.29px;top:148.98px;width:19.75px;height:20.86px;background:#f5f5f5;border:1px solid #e6e6e6;border-radius:1.5px;"></div>
<svg class="a" style="left:6.65px;top:156.18px;width:7.02px;height:6.09px;" viewBox="0 0 6 6" preserveAspectRatio="none"><path d="M1 0V5H6" stroke="#4a4a4a" stroke-width="1.7" fill="none"/></svg>
<div class="a " style="left:1003.85px;top:152.31px;width:772.89px;height:14.77px;background:#f2f2f2;"></div>
<div class="a " style="left:1776.74px;top:151.75px;width:32.12px;height:15.51px;background:#dbdbdb;border:1px solid #c6c6c6;border-left:0;"></div>
<div class="a " style="left:971.82px;top:151.38px;width:32.49px;height:1.48px;background:#c6c6c6;"></div>
<div class="a" style="left:971.82px;top:166.58px;height:1px;width:836.68px;background:#bcbcbc"></div>
<div class="a " style="left:1003.59px;top:165.05px;width:804.90px;height:1.85px;background:repeating-linear-gradient(90deg,#bdbdbd 0,#bdbdbd 1px,transparent 1px,transparent 3.984px);"></div>
<div class="a " style="left:1003.59px;top:163.94px;width:804.90px;height:1.29px;background:repeating-linear-gradient(90deg,#bdbdbd 0,#bdbdbd 1px,transparent 1px,transparent 19.920px);"></div>
<div class="a " style="left:971.72px;top:165.05px;width:31.21px;height:1.85px;background:repeating-linear-gradient(90deg,#bdbdbd 0,#bdbdbd 1px,transparent 1px,transparent 3.984px);"></div>
<div class="a t " style="left:1032.61px;top:148.06px;height:22.15px;line-height:22.15px;width:22.15px;text-align:center;font-size:9px;color:#727272;-webkit-text-stroke:0;">1</div>
<div class="a t " style="left:1072.45px;top:148.06px;height:22.15px;line-height:22.15px;width:22.15px;text-align:center;font-size:9px;color:#727272;-webkit-text-stroke:0;">2</div>
<div class="a t " style="left:1112.29px;top:148.06px;height:22.15px;line-height:22.15px;width:22.15px;text-align:center;font-size:9px;color:#727272;-webkit-text-stroke:0;">3</div>
<div class="a t " style="left:1152.13px;top:148.06px;height:22.15px;line-height:22.15px;width:22.15px;text-align:center;font-size:9px;color:#727272;-webkit-text-stroke:0;">4</div>
<div class="a t " style="left:1191.97px;top:148.06px;height:22.15px;line-height:22.15px;width:22.15px;text-align:center;font-size:9px;color:#727272;-webkit-text-stroke:0;">5</div>
<div class="a t " style="left:1231.81px;top:148.06px;height:22.15px;line-height:22.15px;width:22.15px;text-align:center;font-size:9px;color:#727272;-webkit-text-stroke:0;">6</div>
<div class="a t " style="left:1271.65px;top:148.06px;height:22.15px;line-height:22.15px;width:22.15px;text-align:center;font-size:9px;color:#727272;-webkit-text-stroke:0;">7</div>
<div class="a t " style="left:1311.49px;top:148.06px;height:22.15px;line-height:22.15px;width:22.15px;text-align:center;font-size:9px;color:#727272;-webkit-text-stroke:0;">8</div>
<div class="a t " style="left:1351.33px;top:148.06px;height:22.15px;line-height:22.15px;width:22.15px;text-align:center;font-size:9px;color:#727272;-webkit-text-stroke:0;">9</div>
<div class="a t " style="left:1391.17px;top:148.06px;height:22.15px;line-height:22.15px;width:22.15px;text-align:center;font-size:9px;color:#727272;-webkit-text-stroke:0;">10</div>
<div class="a t " style="left:1431.01px;top:148.06px;height:22.15px;line-height:22.15px;width:22.15px;text-align:center;font-size:9px;color:#727272;-webkit-text-stroke:0;">11</div>
<div class="a t " style="left:1470.85px;top:148.06px;height:22.15px;line-height:22.15px;width:22.15px;text-align:center;font-size:9px;color:#727272;-webkit-text-stroke:0;">12</div>
<div class="a t " style="left:1510.69px;top:148.06px;height:22.15px;line-height:22.15px;width:22.15px;text-align:center;font-size:9px;color:#727272;-webkit-text-stroke:0;">13</div>
<div class="a t " style="left:1550.53px;top:148.06px;height:22.15px;line-height:22.15px;width:22.15px;text-align:center;font-size:9px;color:#727272;-webkit-text-stroke:0;">14</div>
<div class="a t " style="left:1590.37px;top:148.06px;height:22.15px;line-height:22.15px;width:22.15px;text-align:center;font-size:9px;color:#727272;-webkit-text-stroke:0;">15</div>
<div class="a t " style="left:1630.21px;top:148.06px;height:22.15px;line-height:22.15px;width:22.15px;text-align:center;font-size:9px;color:#727272;-webkit-text-stroke:0;">16</div>
<div class="a t " style="left:1670.05px;top:148.06px;height:22.15px;line-height:22.15px;width:22.15px;text-align:center;font-size:9px;color:#727272;-webkit-text-stroke:0;">17</div>
<div class="a t " style="left:1709.89px;top:148.06px;height:22.15px;line-height:22.15px;width:22.15px;text-align:center;font-size:9px;color:#727272;-webkit-text-stroke:0;">18</div>
<div class="a t " style="left:1749.73px;top:148.06px;height:22.15px;line-height:22.15px;width:22.15px;text-align:center;font-size:9px;color:#727272;-webkit-text-stroke:0;">19</div>
<div class="a t " style="left:1789.57px;top:148.06px;height:22.15px;line-height:22.15px;width:22.15px;text-align:center;font-size:9px;color:#727272;-webkit-text-stroke:0;">20</div>
<div class="a" style="left:1059.60px;top:167.63px;width:1px;height:4.43px;background:#c2c2c2"></div>
<div class="a" style="left:1115.82px;top:167.63px;width:1px;height:4.43px;background:#c2c2c2"></div>
<div class="a" style="left:1172.03px;top:167.63px;width:1px;height:4.43px;background:#c2c2c2"></div>
<div class="a" style="left:1228.25px;top:167.63px;width:1px;height:4.43px;background:#c2c2c2"></div>
<div class="a" style="left:1284.46px;top:167.63px;width:1px;height:4.43px;background:#c2c2c2"></div>
<div class="a" style="left:1340.68px;top:167.63px;width:1px;height:4.43px;background:#c2c2c2"></div>
<div class="a" style="left:1396.89px;top:167.63px;width:1px;height:4.43px;background:#c2c2c2"></div>
<div class="a" style="left:1453.11px;top:167.63px;width:1px;height:4.43px;background:#c2c2c2"></div>
<div class="a" style="left:1509.32px;top:167.63px;width:1px;height:4.43px;background:#c2c2c2"></div>
<div class="a" style="left:1565.54px;top:167.63px;width:1px;height:4.43px;background:#c2c2c2"></div>
<div class="a" style="left:1621.75px;top:167.63px;width:1px;height:4.43px;background:#c2c2c2"></div>
<div class="a" style="left:1677.97px;top:167.63px;width:1px;height:4.43px;background:#c2c2c2"></div>
<div class="a" style="left:1734.18px;top:167.63px;width:1px;height:4.43px;background:#c2c2c2"></div>
<div class="a" style="left:1790.40px;top:167.63px;width:1px;height:4.43px;background:#c2c2c2"></div>
<div class="a " style="left:967.57px;top:148.98px;width:10.89px;height:4.25px;background:#f4f4f4;border:1px solid #999;border-radius:3px;"></div>
<div class="a" style="left:971.63px;top:153.23px;width:1px;height:13.85px;background:#a8a8a8"></div>
<svg class="a" style="left:999.32px;top:150.09px;width:10.15px;height:23.26px;" viewBox="0 0 10 24" preserveAspectRatio="none"><path d="M0.8 1.4 Q0.8 0.6 1.6 0.6 H8.4 Q9.2 0.6 9.2 1.4 V3.4 L5.6 9 L9.2 14.6 V22.6 Q9.2 23.4 8.4 23.4 H1.6 Q0.8 23.4 0.8 22.6 V14.6 L4.4 9 L0.8 3.4Z" fill="#fafafa" stroke="#8a8a8a" stroke-width="1.1"/><path d="M1 15.6H9" stroke="#8a8a8a" stroke-width="0.9"/></svg>
<svg class="a" style="left:1773.05px;top:161.72px;width:9.60px;height:7.38px;" viewBox="0 0 10 8" preserveAspectRatio="none"><path d="M5 0.6 L9.4 5 V7.4 H0.6 V5Z" fill="#fafafa" stroke="#888" stroke-width="1.1"/></svg>
<div class="a " style="left:1905.23px;top:147.69px;width:12.37px;height:7.38px;background:#f8f8f8;border:1px solid #e2e2e2;border-radius:1px;"></div>
<div class="a " style="left:1907.63px;top:150.28px;width:7.57px;height:2.03px;background:#8c8c8c;"></div>
<div class="a " style="left:1905.23px;top:159.88px;width:12.55px;height:14.22px;background:#f4f4f4;border:1px solid #e4e4e4;border-radius:1px;"></div>
<svg class="a" style="left:1908.18px;top:165.05px;width:6.65px;height:3.69px;" viewBox="0 0 10 6" preserveAspectRatio="none"><path d="M0 6H10L5 0Z" fill="#444"/></svg>
<div class="a " style="left:1905.78px;top:837.23px;width:11.26px;height:30.83px;background:#fbfbfb;border-radius:3px;"></div>
<div class="a " style="left:1904.86px;top:883.57px;width:13.29px;height:15.88px;background:#f6f6f6;border:1px solid #e2e2e2;border-radius:1px;"></div>
<svg class="a" style="left:1907.69px;top:889.29px;width:7.64px;height:4.80px;" viewBox="0 0 10 6" preserveAspectRatio="none"><path d="M0 0H10V1.6L5.7 6H4.3L0 1.6Z" fill="#444"/></svg>
<div class="a " style="left:1904.86px;top:903.69px;width:13.29px;height:15.69px;background:#f6f6f6;border:1px solid #e2e2e2;border-radius:1px;"></div>
<div class="a " style="left:1907.45px;top:907.02px;width:8.12px;height:9.23px;background:#b0b0b0;border:1px solid #8a8a8a;"></div>
<div class="a " style="left:1904.86px;top:922.71px;width:13.29px;height:15.51px;background:#f6f6f6;border:1px solid #e2e2e2;border-radius:1px;"></div>
<svg class="a" style="left:1908.92px;top:926.77px;width:5.17px;height:7.75px;" viewBox="0 0 8 12" preserveAspectRatio="none"><path d="M0 5H8L4 0Z M0 10H8L4 6Z" fill="#555"/></svg>
<div class="a " style="left:1904.86px;top:939.51px;width:13.29px;height:16.80px;background:#f6f6f6;border:1px solid #e2e2e2;border-radius:1px;"></div>
<svg class="a" style="left:1908.92px;top:943.38px;width:5.17px;height:7.75px;" viewBox="0 0 8 12" preserveAspectRatio="none"><path d="M0 1H8L4 5Z M0 7H8L4 12Z" fill="#555"/></svg>
<div class="a " style="left:356.68px;top:67.02px;width:236.86px;height:299.45px;background:#fff;border:1px solid #b4b4b4;box-shadow:1px 1.5px 4px rgba(0,0,0,.38);"></div>
<div class="a " style="left:435.14px;top:72.37px;width:79.57px;height:3.14px;background:#d4d4d4;"></div>
<div class="a" style="left:358.89px;top:79.81px;height:1px;width:233.35px;background:#e6e6e6"></div>
<svg class="a" style="left:367.38px;top:86.22px;width:13.11px;height:12.92px;" viewBox="0 0 14 14" preserveAspectRatio="none"><rect x="0.8" y="0.8" width="12.4" height="12.4" fill="#fff" stroke="#9a9a9a" stroke-width="1.2"/><path d="M1.2 12.8 L12.8 1.2" stroke="#e03030" stroke-width="1.3"/></svg>
<div class="a t " style="left:390.46px;top:81.97px;height:22.15px;line-height:22.15px;color:#333;">없음(O)</div>
<div class="a" style="left:358.89px;top:103.44px;height:1px;width:233.35px;background:#e0e0e0"></div>
<div class="a " style="left:367.75px;top:114.46px;width:187.57px;height:22.52px;background:#fff;border:1.5px solid #cbcbcb;border-radius:3.5px;"></div>
<div class="a " style="left:367.75px;top:114.46px;width:63.69px;height:22.52px;background:#d8e2f6;border:1.5px solid #98afe8;border-radius:3.5px 0 0 3.5px;"></div>
<div class="a" style="left:491.32px;top:115.02px;width:1px;height:21.60px;background:#cfcfcf"></div>
<div class="a " style="left:559.75px;top:114.46px;width:23.08px;height:22.52px;background:#fff;border:1.5px solid #cbcbcb;border-radius:3.5px;"></div>
<svg class="a" style="left:392.12px;top:118.89px;width:14.03px;height:13.66px;" viewBox="0 0 14 14" preserveAspectRatio="none"><rect x="0.5" y="0.5" width="13" height="13" rx="1" fill="#c8ccd8" stroke="#9a9a9a" stroke-width="1"/><rect x="2.4" y="2.4" width="3.6" height="3.6" fill="#e04a3a"/><rect x="8" y="2.4" width="3.6" height="3.6" fill="#3a62d0"/><rect x="2.4" y="8" width="3.6" height="3.6" fill="#f0b83a"/><rect x="8" y="8" width="3.6" height="3.6" fill="#3aa85a"/></svg>
<svg class="a" style="left:454.15px;top:118.89px;width:14.03px;height:13.66px;" viewBox="0 0 14 14" preserveAspectRatio="none"><defs><linearGradient id="rg1" x1="0" y1="0" x2="1" y2="1"><stop offset="0" stop-color="#ff3030"/><stop offset="0.25" stop-color="#ffd020"/><stop offset="0.5" stop-color="#30e060"/><stop offset="0.75" stop-color="#3080ff"/><stop offset="1" stop-color="#e040e0"/></linearGradient></defs><rect x="0.5" y="0.5" width="13" height="13" rx="1" fill="#c8c8c8" stroke="#9a9a9a" stroke-width="1"/><rect x="2.2" y="2.2" width="9.6" height="9.6" fill="url(#rg1)"/><circle cx="5" cy="8" r="3" fill="#ff30c0" opacity="0.8"/></svg>
<svg class="a" style="left:516.92px;top:118.89px;width:14.03px;height:13.66px;" viewBox="0 0 14 14" preserveAspectRatio="none"><defs><linearGradient id="rg2" x1="0" y1="0" x2="0" y2="1"><stop offset="0" stop-color="#eef2fa"/><stop offset="1" stop-color="#2a4a9a"/></linearGradient></defs><rect x="0.5" y="0.5" width="13" height="13" rx="1" fill="#d0d0d0" stroke="#8a8a8a" stroke-width="1"/><rect x="2.2" y="2.2" width="9.6" height="8.4" fill="url(#rg2)"/><rect x="1" y="11.6" width="12" height="1.6" fill="#444"/></svg>
<svg class="a" style="left:563.08px;top:117.78px;width:16.98px;height:16.62px;" viewBox="0 0 18 18" preserveAspectRatio="none"><path d="M10.6 6.4 L3.2 13.8 L1.6 17 L4.8 15.4 L12.2 8Z" fill="#f4b840" stroke="#c89020" stroke-width="0.7"/><path d="M6.4 10.4 L10.4 6.2 L12.6 8.2 L8.4 12.4Z" fill="#3b62c4"/><path d="M8.4 5 L13.4 10 L14.8 8.6 L13.6 7.4 L17 4 Q17.8 2.4 16.6 1.4 Q15.4 0.4 14 1.4 L10.8 4.6 L9.8 3.6Z" fill="#26365e"/><path d="M13 5.4 L17.2 1.2" stroke="#1a1a2a" stroke-width="2.2"/></svg>
<div class="a " style="left:369.14px;top:148.06px;width:13.85px;height:13.85px;background:#ffffff;border:1px solid #dcdcdc;"></div>
<div class="a " style="left:388.21px;top:148.06px;width:13.85px;height:13.85px;background:#000000;"></div>
<div class="a " style="left:407.28px;top:148.06px;width:13.85px;height:13.85px;background:#fbf3db;border:1px solid #dcdcdc;"></div>
<div class="a " style="left:426.35px;top:148.06px;width:13.85px;height:13.85px;background:#2f3585;"></div>
<div class="a " style="left:445.42px;top:148.06px;width:13.85px;height:13.85px;background:#5b81d9;"></div>
<div class="a " style="left:464.49px;top:148.06px;width:13.85px;height:13.85px;background:#ff8032;"></div>
<div class="a " style="left:483.56px;top:148.06px;width:13.85px;height:13.85px;background:#acacac;"></div>
<div class="a " style="left:502.63px;top:148.06px;width:13.85px;height:13.85px;background:#ffd400;"></div>
<div class="a " style="left:521.70px;top:148.06px;width:13.85px;height:13.85px;background:#1f9060;"></div>
<div class="a " style="left:540.78px;top:148.06px;width:13.85px;height:13.85px;background:#9b4fc0;"></div>
<div class="a " style="left:560.31px;top:147.69px;width:13.48px;height:13.66px;background:#fff;border:1px solid #d4d4d4;border-radius:1.5px;"></div>
<svg class="a" style="left:565.48px;top:152.12px;width:3.88px;height:5.17px;" viewBox="0 0 6 10" preserveAspectRatio="none"><path d="M0 0V10L6 5Z" fill="#444"/></svg>
<div class="a " style="left:369.14px;top:167.82px;width:13.85px;height:13.37px;background:#f2f2f2;"></div>
<div class="a " style="left:369.14px;top:181.00px;width:13.85px;height:13.37px;background:#d9d9d9;"></div>
<div class="a " style="left:369.14px;top:194.18px;width:13.85px;height:13.37px;background:#bfbfbf;"></div>
<div class="a " style="left:369.14px;top:207.36px;width:13.85px;height:13.37px;background:#a6a6a6;"></div>
<div class="a " style="left:369.14px;top:220.54px;width:13.85px;height:13.37px;background:#7f7f7f;"></div>
<div class="a " style="left:369.14px;top:167.82px;width:13.85px;height:65.91px;border:1px solid rgba(0,0,0,.08);"></div>
<div class="a " style="left:388.21px;top:167.82px;width:13.85px;height:13.37px;background:#7f7f7f;"></div>
<div class="a " style="left:388.21px;top:181.00px;width:13.85px;height:13.37px;background:#595959;"></div>
<div class="a " style="left:388.21px;top:194.18px;width:13.85px;height:13.37px;background:#404040;"></div>
<div class="a " style="left:388.21px;top:207.36px;width:13.85px;height:13.37px;background:#262626;"></div>
<div class="a " style="left:388.21px;top:220.54px;width:13.85px;height:13.37px;background:#0d0d0d;"></div>
<div class="a " style="left:388.21px;top:167.82px;width:13.85px;height:65.91px;border:1px solid rgba(0,0,0,.08);"></div>
<div class="a " style="left:407.28px;top:167.82px;width:13.85px;height:13.37px;background:#f7e3a0;"></div>
<div class="a " style="left:407.28px;top:181.00px;width:13.85px;height:13.37px;background:#e8cc62;"></div>
<div class="a " style="left:407.28px;top:194.18px;width:13.85px;height:13.37px;background:#cfa520;"></div>
<div class="a " style="left:407.28px;top:207.36px;width:13.85px;height:13.37px;background:#5c4a0e;"></div>
<div class="a " style="left:407.28px;top:220.54px;width:13.85px;height:13.37px;background:#2e2507;"></div>
<div class="a " style="left:407.28px;top:167.82px;width:13.85px;height:65.91px;border:1px solid rgba(0,0,0,.08);"></div>
<div class="a " style="left:426.35px;top:167.82px;width:13.85px;height:13.37px;background:#d8d9ef;"></div>
<div class="a " style="left:426.35px;top:181.00px;width:13.85px;height:13.37px;background:#a9abdc;"></div>
<div class="a " style="left:426.35px;top:194.18px;width:13.85px;height:13.37px;background:#7a7ec6;"></div>
<div class="a " style="left:426.35px;top:207.36px;width:13.85px;height:13.37px;background:#262b6b;"></div>
<div class="a " style="left:426.35px;top:220.54px;width:13.85px;height:13.37px;background:#1a1d47;"></div>
<div class="a " style="left:426.35px;top:167.82px;width:13.85px;height:65.91px;border:1px solid rgba(0,0,0,.08);"></div>
<div class="a " style="left:445.42px;top:167.82px;width:13.85px;height:13.37px;background:#dfe7f8;"></div>
<div class="a " style="left:445.42px;top:181.00px;width:13.85px;height:13.37px;background:#bfd0f1;"></div>
<div class="a " style="left:445.42px;top:194.18px;width:13.85px;height:13.37px;background:#9fb8ea;"></div>
<div class="a " style="left:445.42px;top:207.36px;width:13.85px;height:13.37px;background:#2c55b8;"></div>
<div class="a " style="left:445.42px;top:220.54px;width:13.85px;height:13.37px;background:#1d397b;"></div>
<div class="a " style="left:445.42px;top:167.82px;width:13.85px;height:65.91px;border:1px solid rgba(0,0,0,.08);"></div>
<div class="a " style="left:464.49px;top:167.82px;width:13.85px;height:13.37px;background:#ffe5d5;"></div>
<div class="a " style="left:464.49px;top:181.00px;width:13.85px;height:13.37px;background:#ffccab;"></div>
<div class="a " style="left:464.49px;top:194.18px;width:13.85px;height:13.37px;background:#ffb283;"></div>
<div class="a " style="left:464.49px;top:207.36px;width:13.85px;height:13.37px;background:#f05a05;"></div>
<div class="a " style="left:464.49px;top:220.54px;width:13.85px;height:13.37px;background:#a03c03;"></div>
<div class="a " style="left:464.49px;top:167.82px;width:13.85px;height:65.91px;border:1px solid rgba(0,0,0,.08);"></div>
<div class="a " style="left:483.56px;top:167.82px;width:13.85px;height:13.37px;background:#efefef;"></div>
<div class="a " style="left:483.56px;top:181.00px;width:13.85px;height:13.37px;background:#dedede;"></div>
<div class="a " style="left:483.56px;top:194.18px;width:13.85px;height:13.37px;background:#cdcdcd;"></div>
<div class="a " style="left:483.56px;top:207.36px;width:13.85px;height:13.37px;background:#818181;"></div>
<div class="a " style="left:483.56px;top:220.54px;width:13.85px;height:13.37px;background:#565656;"></div>
<div class="a " style="left:483.56px;top:167.82px;width:13.85px;height:65.91px;border:1px solid rgba(0,0,0,.08);"></div>
<div class="a " style="left:502.63px;top:167.82px;width:13.85px;height:13.37px;background:#fff6c8;"></div>
<div class="a " style="left:502.63px;top:181.00px;width:13.85px;height:13.37px;background:#ffee92;"></div>
<div class="a " style="left:502.63px;top:194.18px;width:13.85px;height:13.37px;background:#ffe55c;"></div>
<div class="a " style="left:502.63px;top:207.36px;width:13.85px;height:13.37px;background:#c0a000;"></div>
<div class="a " style="left:502.63px;top:220.54px;width:13.85px;height:13.37px;background:#806a00;"></div>
<div class="a " style="left:502.63px;top:167.82px;width:13.85px;height:65.91px;border:1px solid rgba(0,0,0,.08);"></div>
<div class="a " style="left:521.70px;top:167.82px;width:13.85px;height:13.37px;background:#cdf3e3;"></div>
<div class="a " style="left:521.70px;top:181.00px;width:13.85px;height:13.37px;background:#9be8c8;"></div>
<div class="a " style="left:521.70px;top:194.18px;width:13.85px;height:13.37px;background:#6adcad;"></div>
<div class="a " style="left:521.70px;top:207.36px;width:13.85px;height:13.37px;background:#176c48;"></div>
<div class="a " style="left:521.70px;top:220.54px;width:13.85px;height:13.37px;background:#0f4830;"></div>
<div class="a " style="left:521.70px;top:167.82px;width:13.85px;height:65.91px;border:1px solid rgba(0,0,0,.08);"></div>
<div class="a " style="left:540.78px;top:167.82px;width:13.85px;height:13.37px;background:#ecdcf3;"></div>
<div class="a " style="left:540.78px;top:181.00px;width:13.85px;height:13.37px;background:#d8b9e8;"></div>
<div class="a " style="left:540.78px;top:194.18px;width:13.85px;height:13.37px;background:#c496dc;"></div>
<div class="a " style="left:540.78px;top:207.36px;width:13.85px;height:13.37px;background:#743b90;"></div>
<div class="a " style="left:540.78px;top:220.54px;width:13.85px;height:13.37px;background:#4e2760;"></div>
<div class="a " style="left:540.78px;top:167.82px;width:13.85px;height:65.91px;border:1px solid rgba(0,0,0,.08);"></div>
<div class="a" style="left:365.54px;top:242.27px;height:1px;width:208.62px;background:#dedede"></div>
<div class="a " style="left:369.14px;top:249.42px;width:13.66px;height:12.92px;background:#000000;"></div>
<div class="a " style="left:388.21px;top:249.42px;width:13.66px;height:12.92px;background:#ff0000;"></div>
<div class="a " style="left:407.28px;top:249.42px;width:13.66px;height:12.92px;background:#ff6600;"></div>
<div class="a " style="left:426.35px;top:249.42px;width:13.66px;height:12.92px;background:#ffff00;"></div>
<div class="a " style="left:445.42px;top:249.42px;width:13.66px;height:12.92px;background:#b2ff00;"></div>
<div class="a " style="left:464.49px;top:249.42px;width:13.66px;height:12.92px;background:#008000;"></div>
<div class="a " style="left:483.56px;top:249.42px;width:13.66px;height:12.92px;background:#3cc8f0;"></div>
<div class="a " style="left:502.63px;top:249.42px;width:13.66px;height:12.92px;background:#0000ff;"></div>
<div class="a " style="left:521.70px;top:249.42px;width:13.66px;height:12.92px;background:#1c1c60;"></div>
<div class="a " style="left:539.11px;top:247.75px;width:17.17px;height:16.25px;background:#e8e8e8;border:1px solid #9a9a9a;"></div>
<div class="a " style="left:540.78px;top:249.42px;width:13.66px;height:12.92px;background:#800080;"></div>
<div class="a" style="left:365.54px;top:267.93px;height:1px;width:208.62px;background:#dedede"></div>
<div class="a " style="left:369.14px;top:275.26px;width:13.66px;height:14.03px;background:#ff6600;"></div>
<div class="a " style="left:388.21px;top:275.26px;width:13.66px;height:14.03px;background:#008000;"></div>
<div class="a " style="left:407.28px;top:275.26px;width:13.66px;height:14.03px;background:#0000ff;"></div>
<div class="a " style="left:424.69px;top:273.60px;width:17.17px;height:17.35px;background:#e8e8e8;border:1px solid #9a9a9a;"></div>
<div class="a " style="left:426.35px;top:275.26px;width:13.66px;height:14.03px;background:#800080;"></div>
<div class="a " style="left:445.42px;top:275.26px;width:13.66px;height:14.03px;background:#353c88;"></div>
<div class="a " style="left:464.49px;top:275.26px;width:13.66px;height:14.03px;background:#ff0000;"></div>
<div class="a" style="left:358.89px;top:293.78px;height:1px;width:233.35px;background:#ececec"></div>
<div class="a t " style="left:365.54px;top:297.78px;height:22.15px;line-height:22.15px;color:#333;">투명도</div>
<div class="a" style="left:411.69px;top:308.55px;height:1px;width:175.38px;background:#a8a8a8"></div>
<div class="a " style="left:405.05px;top:304.98px;width:8.49px;height:8.49px;background:#fff;border:1px solid #777;border-radius:50%;"></div>
<div class="a " style="left:358.71px;top:320.31px;width:232.98px;height:22.34px;background:#d8e2f6;border:1px solid #9db3e8;border-radius:3px;"></div>
<svg class="a" style="left:366.46px;top:324.92px;width:15.32px;height:13.85px;" viewBox="0 0 16 14" preserveAspectRatio="none"><path d="M0 1H16" stroke="#777" stroke-width="1"/><path d="M0 4.4H16" stroke="#5a5a5a" stroke-width="1.6"/><path d="M0 8.2H16" stroke="#4a4a4a" stroke-width="2.2"/><path d="M0 12.2H16" stroke="#3a3a3a" stroke-width="3"/></svg>
<div class="a t " style="left:390.65px;top:320.49px;height:22.15px;line-height:22.15px;color:#2b4c9b;">선 굵기(B)</div>
<svg class="a" style="left:582.28px;top:328.98px;width:3.69px;height:4.80px;" viewBox="0 0 6 8" preserveAspectRatio="none"><path d="M0 0V8L6 4Z" fill="#223a7a"/></svg>
<svg class="a" style="left:366.46px;top:346.71px;width:15.32px;height:14.40px;" viewBox="0 0 16 15" preserveAspectRatio="none"><path d="M0 1.4H16" stroke="#999" stroke-width="1.4"/><path d="M0 5.4H16" stroke="#aaa" stroke-width="1.2" stroke-dasharray="2 1"/><path d="M0 9H16" stroke="#999" stroke-width="1.4" stroke-dasharray="1 1"/><path d="M0 13H16" stroke="#555" stroke-width="2.4"/></svg>
<div class="a t " style="left:390.65px;top:343.20px;height:22.15px;line-height:22.15px;color:#333;">선 종류(C)</div>
<svg class="a" style="left:582.28px;top:351.69px;width:3.69px;height:4.80px;" viewBox="0 0 6 8" preserveAspectRatio="none"><path d="M0 0V8L6 4Z" fill="#333"/></svg>
<div class="a " style="left:592.43px;top:319.38px;width:130.52px;height:379.02px;background:#fff;border:1px solid #b8b8b8;box-shadow:1px 1.5px 4px rgba(0,0,0,.36);"></div>
<div class="a t " style="left:594.46px;top:320.77px;height:22.15px;line-height:22.15px;width:56.68px;text-align:right;font-size:12.3px;color:#4a4a4a;-webkit-text-stroke:0.1px #4a4a4a;letter-spacing:0.55px;">0.1mm</div>
<div class="a " style="left:655.75px;top:330.37px;width:52.98px;height:1.66px;background:#8c8c8c;"></div>
<div class="a t " style="left:594.46px;top:342.79px;height:22.15px;line-height:22.15px;width:56.68px;text-align:right;font-size:12.3px;color:#4a4a4a;-webkit-text-stroke:0.1px #4a4a4a;letter-spacing:0.55px;">0.12mm</div>
<div class="a " style="left:655.75px;top:352.39px;width:52.98px;height:1.66px;background:#8c8c8c;"></div>
<div class="a t " style="left:594.46px;top:364.82px;height:22.15px;line-height:22.15px;width:56.68px;text-align:right;font-size:12.3px;color:#4a4a4a;-webkit-text-stroke:0.1px #4a4a4a;letter-spacing:0.55px;">0.15mm</div>
<div class="a " style="left:655.75px;top:374.42px;width:52.98px;height:1.66px;background:#8a8a8a;"></div>
<div class="a t " style="left:594.46px;top:386.84px;height:22.15px;line-height:22.15px;width:56.68px;text-align:right;font-size:12.3px;color:#4a4a4a;-webkit-text-stroke:0.1px #4a4a4a;letter-spacing:0.55px;">0.2mm</div>
<div class="a " style="left:655.75px;top:396.44px;width:52.98px;height:1.66px;background:#888;"></div>
<div class="a t " style="left:594.46px;top:408.87px;height:22.15px;line-height:22.15px;width:56.68px;text-align:right;font-size:12.3px;color:#4a4a4a;-webkit-text-stroke:0.1px #4a4a4a;letter-spacing:0.55px;">0.25mm</div>
<div class="a " style="left:655.75px;top:418.47px;width:52.98px;height:1.66px;background:#888;"></div>
<div class="a t " style="left:594.46px;top:430.89px;height:22.15px;line-height:22.15px;width:56.68px;text-align:right;font-size:12.3px;color:#4a4a4a;-webkit-text-stroke:0.1px #4a4a4a;letter-spacing:0.55px;">0.3mm</div>
<div class="a " style="left:655.75px;top:440.45px;width:52.98px;height:1.75px;background:#868686;"></div>
<div class="a " style="left:593.72px;top:452.46px;width:126.46px;height:21.78px;background:#d8e2f6;border:1px solid #9db3e8;border-radius:3px;"></div>
<div class="a t " style="left:594.46px;top:452.92px;height:22.15px;line-height:22.15px;width:56.68px;text-align:right;font-size:12.3px;color:#4a4a4a;-webkit-text-stroke:0.1px #4a4a4a;letter-spacing:0.55px;">0.4mm</div>
<div class="a " style="left:655.75px;top:462.42px;width:52.98px;height:1.85px;background:#3a3a3a;"></div>
<div class="a t " style="left:594.46px;top:474.94px;height:22.15px;line-height:22.15px;width:56.68px;text-align:right;font-size:12.3px;color:#4a4a4a;-webkit-text-stroke:0.1px #4a4a4a;letter-spacing:0.55px;">0.5mm</div>
<div class="a " style="left:655.75px;top:484.40px;width:52.98px;height:1.94px;background:#2a2a2a;"></div>
<div class="a t " style="left:594.46px;top:496.97px;height:22.15px;line-height:22.15px;width:56.68px;text-align:right;font-size:12.3px;color:#4a4a4a;-webkit-text-stroke:0.1px #4a4a4a;letter-spacing:0.55px;">0.6mm</div>
<div class="a " style="left:655.75px;top:506.38px;width:52.98px;height:2.03px;background:#222;"></div>
<div class="a t " style="left:594.46px;top:518.99px;height:22.15px;line-height:22.15px;width:56.68px;text-align:right;font-size:12.3px;color:#4a4a4a;-webkit-text-stroke:0.1px #4a4a4a;letter-spacing:0.55px;">0.7mm</div>
<div class="a " style="left:655.75px;top:528.22px;width:52.98px;height:2.40px;background:#1a1a1a;"></div>
<div class="a t " style="left:594.46px;top:541.02px;height:22.15px;line-height:22.15px;width:56.68px;text-align:right;font-size:12.3px;color:#4a4a4a;-webkit-text-stroke:0.1px #4a4a4a;letter-spacing:0.55px;">1mm</div>
<div class="a " style="left:655.75px;top:549.88px;width:52.98px;height:3.14px;background:#111;"></div>
<div class="a t " style="left:594.46px;top:563.04px;height:22.15px;line-height:22.15px;width:56.68px;text-align:right;font-size:12.3px;color:#4a4a4a;-webkit-text-stroke:0.1px #4a4a4a;letter-spacing:0.55px;">1.5mm</div>
<div class="a " style="left:655.75px;top:572.09px;width:52.98px;height:3.51px;background:#111;"></div>
<div class="a t " style="left:594.46px;top:585.06px;height:22.15px;line-height:22.15px;width:56.68px;text-align:right;font-size:12.3px;color:#4a4a4a;-webkit-text-stroke:0.1px #4a4a4a;letter-spacing:0.55px;">2mm</div>
<div class="a " style="left:655.75px;top:593.19px;width:52.98px;height:4.62px;background:#111;"></div>
<div class="a t " style="left:594.46px;top:607.09px;height:22.15px;line-height:22.15px;width:56.68px;text-align:right;font-size:12.3px;color:#4a4a4a;-webkit-text-stroke:0.1px #4a4a4a;letter-spacing:0.55px;">3mm</div>
<div class="a " style="left:655.75px;top:614.75px;width:52.98px;height:7.38px;background:#111;"></div>
<div class="a t " style="left:594.46px;top:629.11px;height:22.15px;line-height:22.15px;width:56.68px;text-align:right;font-size:12.3px;color:#4a4a4a;-webkit-text-stroke:0.1px #4a4a4a;letter-spacing:0.55px;">4mm</div>
<div class="a " style="left:655.75px;top:635.94px;width:52.98px;height:9.05px;background:#111;"></div>
<div class="a t " style="left:594.46px;top:651.14px;height:22.15px;line-height:22.15px;width:56.68px;text-align:right;font-size:12.3px;color:#4a4a4a;-webkit-text-stroke:0.1px #4a4a4a;letter-spacing:0.55px;">5mm</div>
<div class="a " style="left:655.75px;top:655.85px;width:52.98px;height:11.45px;background:#111;"></div>
<div class="a" style="left:594.46px;top:672.06px;height:1px;width:126.65px;background:#e6e6e6"></div>
<div class="a t " style="left:624.74px;top:674.58px;height:22.15px;line-height:22.15px;color:#333;">다른 선(O)...</div>
<div class="a " style="left:708.00px;top:466.15px;width:48.92px;height:22.89px;background:#fbfae2;border:1px solid #b8b8b0;border-radius:2.5px;box-shadow:1px 1px 2.5px rgba(0,0,0,.3);"></div>
<div class="a t " style="left:712.62px;top:466.89px;height:22.15px;line-height:22.15px;font-size:12.3px;color:#4a4a4a;-webkit-text-stroke:0.1px #4a4a4a;letter-spacing:0.55px;">0.4mm</div>
</div></body></html>
